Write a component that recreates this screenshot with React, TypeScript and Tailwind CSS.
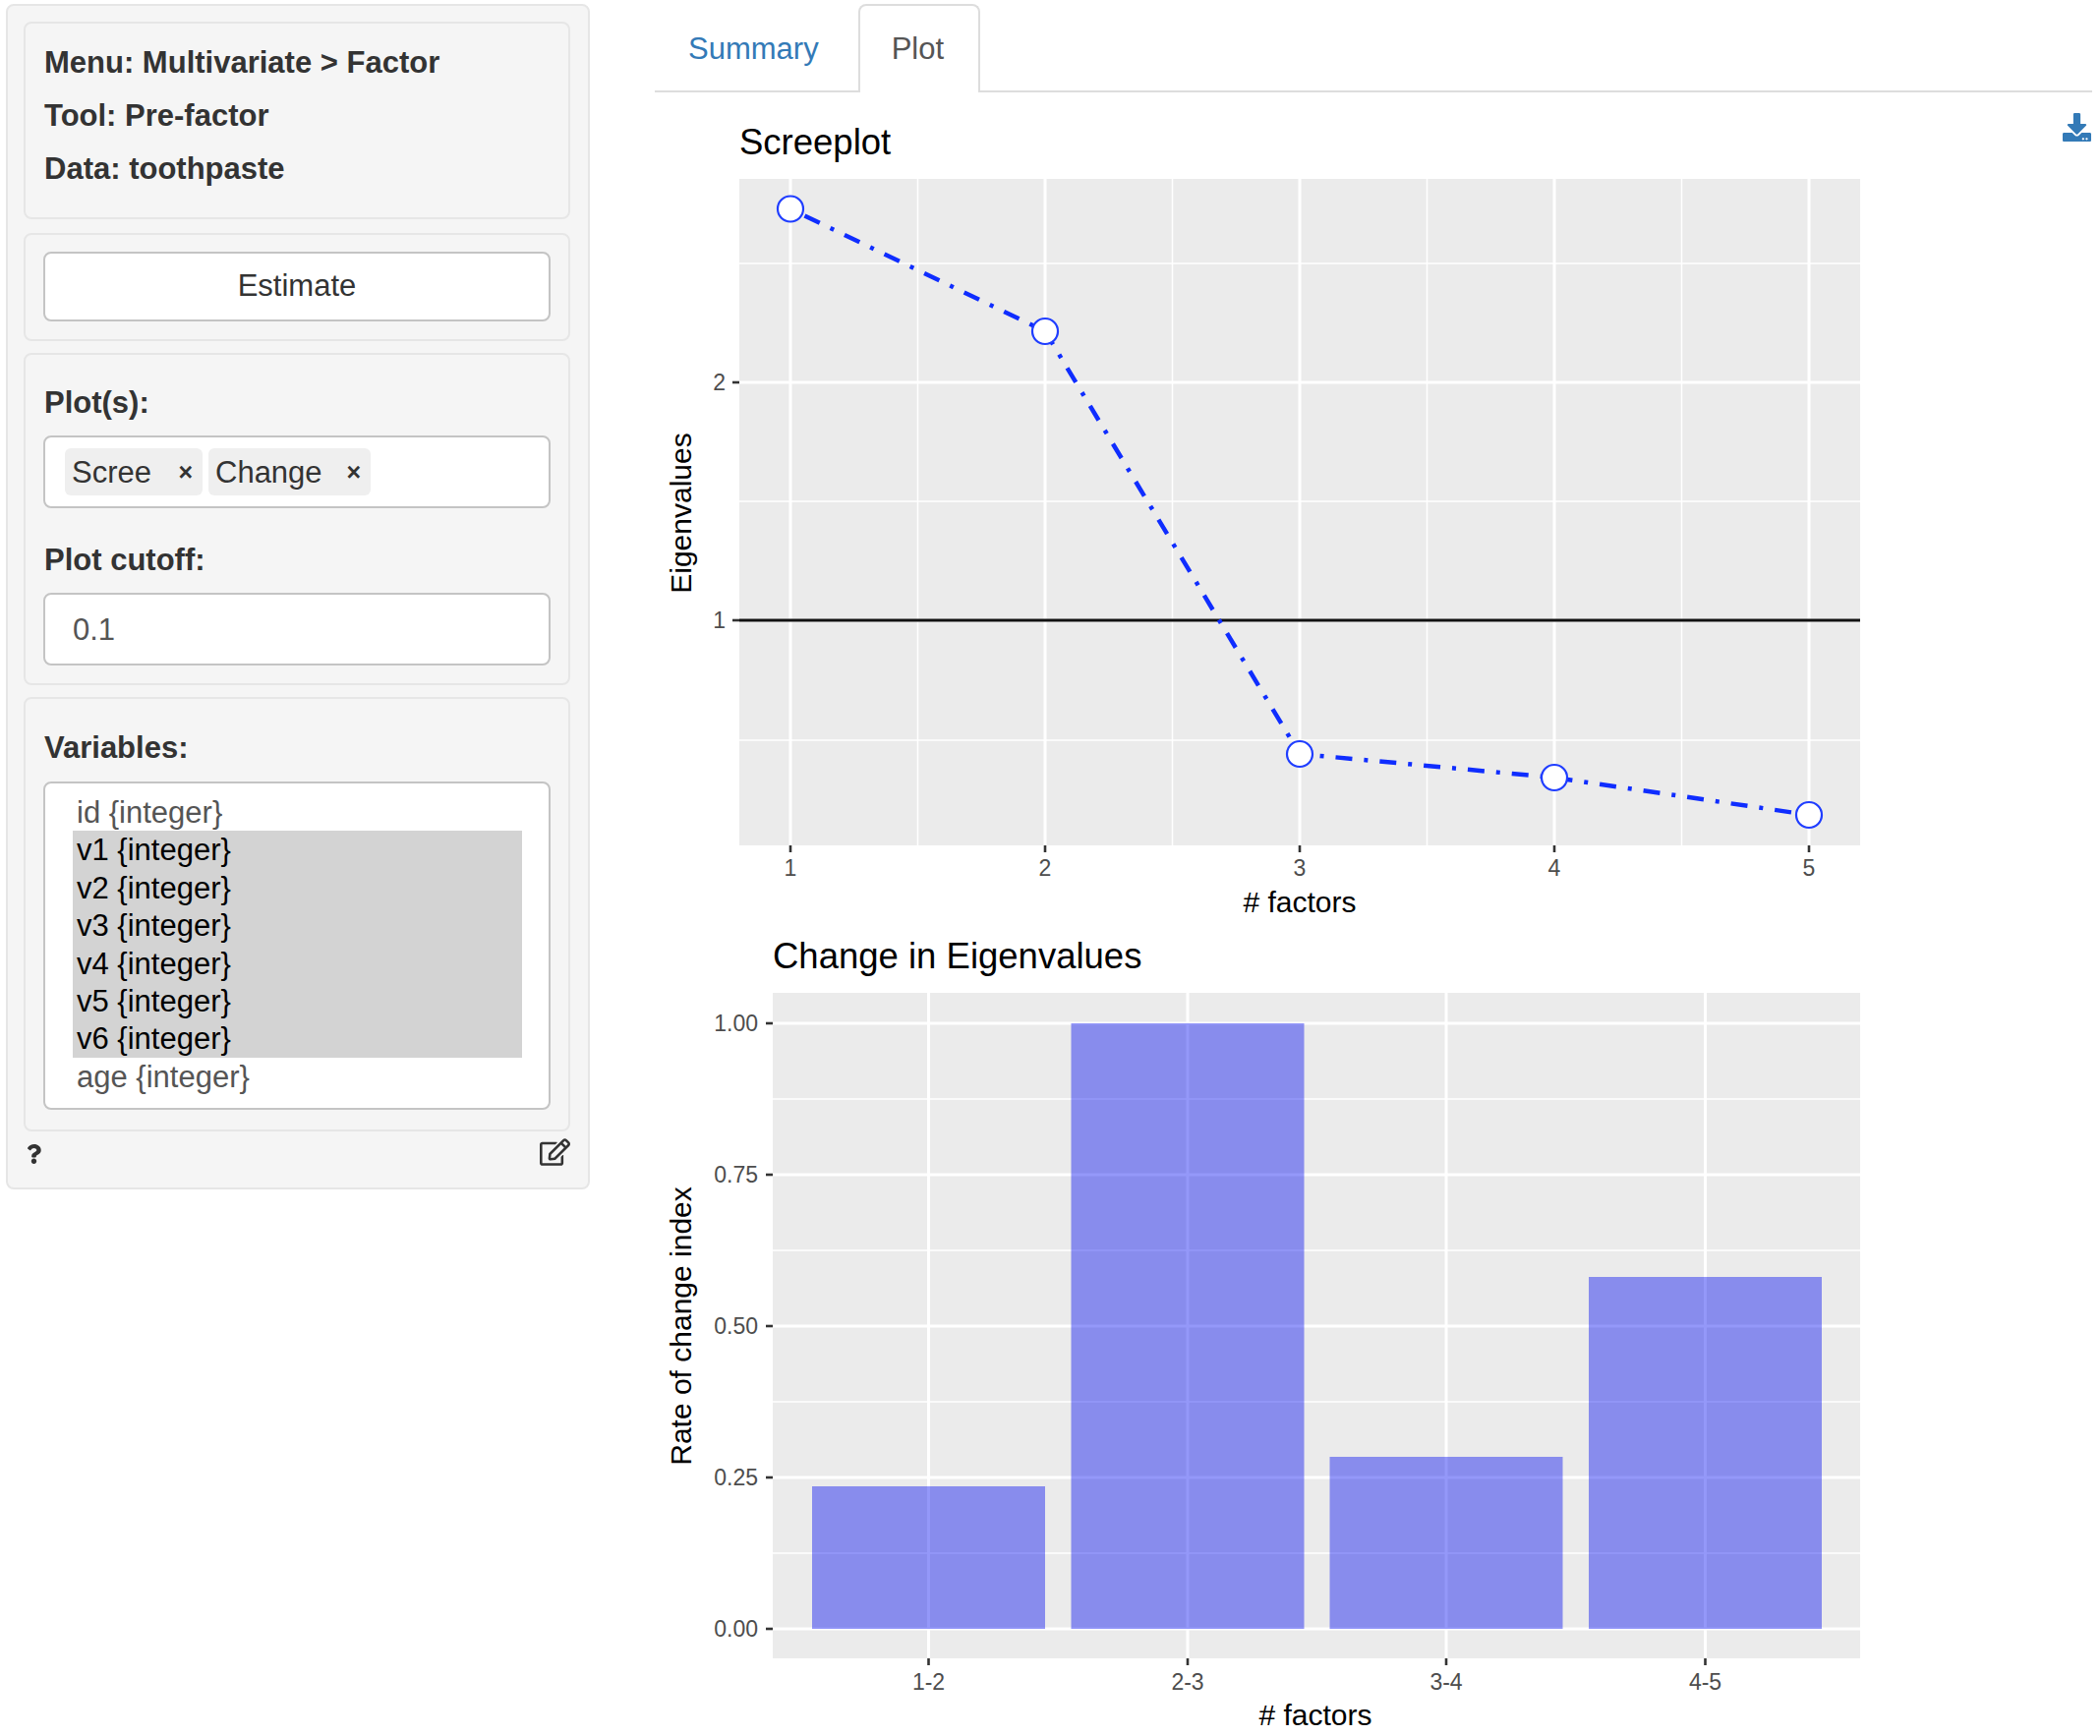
import { FaDownload, FaQuestion, FaRegEdit } from "react-icons/fa";

const cardClass = "rounded-lg border-2 border-[#e6e6e6] bg-[#f5f5f5]";
const inputClass = "h-[74px] rounded-lg border-2 border-[#c4c4c4] bg-white";
const labelClass = "h-[42px] pl-[1px] font-bold leading-[44px]";

const variables = [
  { name: "id {integer}", selected: false },
  { name: "v1 {integer}", selected: true },
  { name: "v2 {integer}", selected: true },
  { name: "v3 {integer}", selected: true },
  { name: "v4 {integer}", selected: true },
  { name: "v5 {integer}", selected: true },
  { name: "v6 {integer}", selected: true },
  { name: "age {integer}", selected: false },
];

function Chip({ label, width }: { label: string; width: string }) {
  return (
    <div className={`flex h-[48px] items-center justify-between rounded-md bg-[#efefef] pl-[7px] pr-[10px] ${width}`}>
      <span className="pt-[2px]">{label}</span>
      <span className="pt-[2px] text-[25px] font-bold">×</span>
    </div>
  );
}

function Sidebar() {
  return (
    <div className="ml-[6px] mt-[4px] h-[1206px] w-[594px] shrink-0 rounded-lg border-2 border-[#e6e6e6] bg-[#f5f5f5] pl-[16px] pr-[18px] pt-[16px]">
      <div className={`${cardClass} h-[201px] pl-[19px] pt-[12px]`}>
        <div className="h-[54px] font-bold leading-[55px]">Menu: Multivariate &gt; Factor</div>
        <div className="h-[54px] font-bold leading-[55px]">Tool: Pre-factor</div>
        <div className="h-[54px] font-bold leading-[55px]">Data: toothpaste</div>
      </div>

      <div className={`${cardClass} mt-[14px] h-[110px] px-[18px] pt-[17px]`}>
        <button className="h-[71px] w-full rounded-lg border-2 border-[#c4c4c4] bg-white text-center">Estimate</button>
      </div>

      <div className={`${cardClass} mt-[12px] h-[338px] px-[18px] pt-[27px]`}>
        <div className={labelClass}>Plot(s):</div>
        <div className={`${inputClass} mt-[13px] flex items-center gap-[6px] pl-[20px]`}>
          <Chip label="Scree" width="w-[140px]" />
          <Chip label="Change" width="w-[165px]" />
        </div>
        <div className={`${labelClass} mt-[31px]`}>Plot cutoff:</div>
        <div className={`${inputClass} mt-[13px] flex items-center pl-[28px] pt-[2px] text-[#555]`}>0.1</div>
      </div>

      <div className={`${cardClass} mt-[12px] h-[442px] px-[18px] pt-[28px]`}>
        <div className={labelClass}>Variables:</div>
        <div className="mt-[14px] h-[334px] rounded-lg border-2 border-[#c4c4c4] bg-white pl-[28px] pr-[27px] pt-[10px]">
          {variables.map((v) => (
            <div
              key={v.name}
              className={`h-[38.4px] pl-[4px] leading-[40px] ${v.selected ? "bg-[#d3d3d3] text-black" : "text-[#555]"}`}
            >
              {v.name}
            </div>
          ))}
        </div>
      </div>

      <div className="mt-[7px] flex items-center justify-between pl-[3px]">
        <FaQuestion className="h-[22px] w-[15px] text-[#333]" />
        <FaRegEdit className="mb-[3px] h-[28px] w-[31px] text-[#333]" />
      </div>
    </div>
  );
}

function PlotText({ x, y, size = 23, anchor = "middle", fill = "#4d4d4d", rotate, children }: {
  x: number;
  y: number;
  size?: number;
  anchor?: "start" | "middle" | "end";
  fill?: string;
  rotate?: boolean;
  children: string;
}) {
  return (
    <text
      x={x}
      y={y}
      fontSize={size}
      textAnchor={anchor}
      fill={fill}
      transform={rotate ? `rotate(-90 ${x} ${y})` : undefined}
    >
      {children}
    </text>
  );
}

function Screeplot() {
  const left = 752;
  const right = 1892;
  const top = 182;
  const bottom = 860;
  const factors = [804, 1063, 1322, 1581, 1840];
  const points = [212.5, 337, 767, 791, 829].map((y, i) => ({ x: factors[i], y }));

  return (
    <svg width={1462} height={851} viewBox="666 94 1462 851" className="block font-['Liberation_Sans',sans-serif]">
      <PlotText x={752} y={157} size={36.5} anchor="start" fill="#000">Screeplot</PlotText>
      <rect x={left} y={top} width={right - left} height={bottom - top} fill="#ebebeb" />
      {[268, 510, 753].map((y) => (
        <line key={y} x1={left} x2={right} y1={y} y2={y} stroke="#fff" strokeWidth={1.5} />
      ))}
      {[933.5, 1192.5, 1451.5, 1710.5].map((x) => (
        <line key={x} x1={x} x2={x} y1={top} y2={bottom} stroke="#fff" strokeWidth={1.5} />
      ))}
      {[389, 631].map((y) => (
        <line key={y} x1={left} x2={right} y1={y} y2={y} stroke="#fff" strokeWidth={3} />
      ))}
      {factors.map((x) => (
        <line key={x} x1={x} x2={x} y1={top} y2={bottom} stroke="#fff" strokeWidth={3} />
      ))}
      <line x1={left} x2={right} y1={631} y2={631} stroke="#111" strokeWidth={3} />
      <polyline
        points={points.map((p) => `${p.x},${p.y}`).join(" ")}
        fill="none"
        stroke="#0f2dff"
        strokeWidth={4.5}
        strokeDasharray="4 12 17 12"
      />
      {points.map((p) => (
        <circle key={p.x} cx={p.x} cy={p.y} r={13} fill="#fff" stroke="#1f3dff" strokeWidth={2.2} />
      ))}
      {[
        { y: 389, label: "2" },
        { y: 631, label: "1" },
      ].map((t) => (
        <g key={t.label}>
          <line x1={745} x2={left} y1={t.y} y2={t.y} stroke="#333" strokeWidth={2.6} />
          <PlotText x={738} y={t.y + 8} anchor="end">{t.label}</PlotText>
        </g>
      ))}
      {factors.map((x, i) => (
        <g key={x}>
          <line x1={x} x2={x} y1={bottom} y2={bottom + 7} stroke="#333" strokeWidth={2.6} />
          <PlotText x={x} y={891}>{String(i + 1)}</PlotText>
        </g>
      ))}
      <PlotText x={1322} y={928} size={30} fill="#000"># factors</PlotText>
      <PlotText x={703} y={522} size={30} fill="#000" rotate>Eigenvalues</PlotText>
    </svg>
  );
}

function ChangePlot() {
  const left = 786;
  const right = 1892;
  const top = 1010;
  const bottom = 1687;
  const base = 1657;
  const bars = [
    { x: 944.5, top: 1512, label: "1-2" },
    { x: 1208, top: 1041, label: "2-3" },
    { x: 1471, top: 1482, label: "3-4" },
    { x: 1734.5, top: 1299, label: "4-5" },
  ];
  const yTicks = [
    { y: 1041, label: "1.00" },
    { y: 1195, label: "0.75" },
    { y: 1349, label: "0.50" },
    { y: 1503, label: "0.25" },
    { y: 1657, label: "0.00" },
  ];

  return (
    <svg width={1462} height={821} viewBox="666 945 1462 821" className="block font-['Liberation_Sans',sans-serif]">
      <PlotText x={786} y={985} size={36.5} anchor="start" fill="#000">Change in Eigenvalues</PlotText>
      <rect x={left} y={top} width={right - left} height={bottom - top} fill="#ebebeb" />
      {[1118, 1272, 1426, 1580].map((y) => (
        <line key={y} x1={left} x2={right} y1={y} y2={y} stroke="#fff" strokeWidth={1.5} />
      ))}
      {yTicks.map((t) => (
        <line key={t.y} x1={left} x2={right} y1={t.y} y2={t.y} stroke="#fff" strokeWidth={3} />
      ))}
      {bars.map((b) => (
        <line key={b.x} x1={b.x} x2={b.x} y1={top} y2={bottom} stroke="#fff" strokeWidth={3} />
      ))}
      {bars.map((b) => (
        <rect key={b.label} x={b.x - 118.5} y={b.top} width={237} height={base - b.top} fill="#000af0" fillOpacity={0.42} />
      ))}
      {yTicks.map((t) => (
        <g key={t.label}>
          <line x1={779} x2={left} y1={t.y} y2={t.y} stroke="#333" strokeWidth={2.6} />
          <PlotText x={771} y={t.y + 8} anchor="end">{t.label}</PlotText>
        </g>
      ))}
      {bars.map((b) => (
        <g key={b.x}>
          <line x1={b.x} x2={b.x} y1={bottom} y2={bottom + 7} stroke="#333" strokeWidth={2.6} />
          <PlotText x={b.x} y={1719}>{b.label}</PlotText>
        </g>
      ))}
      <PlotText x={1338} y={1755} size={30} fill="#000"># factors</PlotText>
      <PlotText x={703} y={1349} size={30} fill="#000" rotate>Rate of change index</PlotText>
    </svg>
  );
}

export default function App() {
  return (
    <div className="flex h-[1766px] overflow-hidden bg-white font-['Liberation_Sans',sans-serif] text-[31px] text-[#333]">
      <Sidebar />
      <main className="relative ml-[66px] w-[1462px] shrink-0">
        <div className="flex h-[94px] items-end gap-[6px] border-b-2 border-[#ddd]">
          <div className="flex h-[88px] items-center self-start px-[34px] pt-[12px] text-[#337ab7]">Summary</div>
          <div className="-mb-[2px] flex h-[90px] items-center rounded-t-lg border-2 border-b-0 border-[#ddd] bg-white pl-[32px] pr-[35px] text-[#555]">
            Plot
          </div>
        </div>
        <FaDownload className="absolute right-[1px] top-[115px] h-[29px] w-[29px] text-[#337ab7]" />
        <Screeplot />
        <ChangePlot />
      </main>
    </div>
  );
}
